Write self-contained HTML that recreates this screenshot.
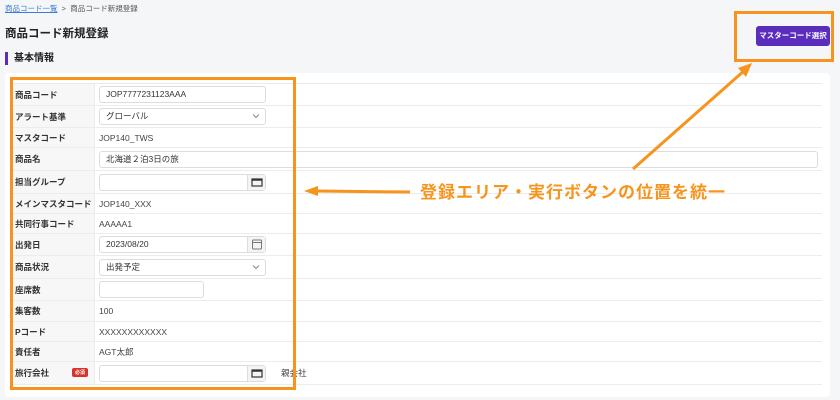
<!DOCTYPE html>
<html><head><meta charset="utf-8"><style>
*{box-sizing:border-box;margin:0;padding:0}
body{width:840px;height:400px;background:#f5f6f8;font-family:"Liberation Sans","Noto Sans CJK JP",sans-serif;color:#333;position:relative;overflow:hidden;font-size:8.5px}
.abs{position:absolute}
.bc{left:5px;top:3px;font-size:7.5px;color:#555}
.bc a{color:#3a7bd5;text-decoration:underline}
h1{position:absolute;left:5px;top:25px;font-size:11.5px;font-weight:bold;color:#222}
h2{position:absolute;left:5px;top:52px;font-size:10px;font-weight:bold;color:#222;border-left:3px solid #5b2dbd;padding-left:6px;line-height:13px}
.card{left:5px;top:73px;width:825px;height:324px;background:#fff;border-radius:4px}
.tbl{left:10px;top:83px;width:812px;border-top:1px solid #eaeaea}
.row{display:flex;border-bottom:1.5px solid #ececec;align-items:center}
.lb{width:85px;height:100%;background:#f7f7f8;font-weight:bold;font-size:8.5px;padding-left:5px;display:flex;align-items:center;border-right:1px solid #ececec;position:relative;align-self:stretch}
.vl{padding-left:4px;font-size:8.5px;color:#444}
.inp{height:17px;border:1px solid #ddd;border-radius:3px;background:#fff;position:relative;font-size:8.5px;padding-left:6px;line-height:15px;color:#333}
.cal{position:absolute;right:0;top:0;width:18px;height:15px;border-left:1px solid #ddd;background:#f4f4f4}
.chev{position:absolute;right:5px;top:4px}
.req{position:absolute;left:62px;top:6px;background:#d9322a;color:#fff;font-size:5px;padding:1px 3px;border-radius:2px}
.btn{left:756px;top:26px;width:74px;height:20px;background:#5b2dbd;color:#fff;font-size:7.5px;font-weight:bold;border-radius:3px;text-align:center;line-height:20px}
.ob{border:3px solid #f7941d}
.note{left:420px;top:178px;font-size:17px;color:#f7941d;font-weight:bold;letter-spacing:1px}
</style></head><body>
<div class="abs bc"><a>商品コード一覧</a> &nbsp;&gt;&nbsp; 商品コード新規登録</div>
<h1>商品コード新規登録</h1>
<h2>基本情報</h2>
<div class="abs btn">マスターコード選択</div>
<div class="abs card"></div>
<div class="abs tbl">
<div class="row" style="height:22px"><div class="lb">商品コード</div><div style="padding-left:4px"><div class="inp" style="width:167px">JOP7777231123AAA</div></div></div>
<div class="row" style="height:22px"><div class="lb">アラート基準</div><div style="padding-left:4px"><div class="inp" style="width:167px">グローバル<svg class="chev" width="8" height="6"><path d="M1 1.5 L4 4.5 L7 1.5" fill="none" stroke="#888" stroke-width="1"/></svg></div></div></div>
<div class="row" style="height:20px"><div class="lb">マスタコード</div><div class="vl">JOP140_TWS</div></div>
<div class="row" style="height:23px"><div class="lb">商品名</div><div style="padding-left:4px"><div class="inp" style="width:719px">北海道２泊3日の旅</div></div></div>
<div class="row" style="height:23px"><div class="lb">担当グループ</div><div style="padding-left:4px"><div class="inp" style="width:167px"><div class="cal"><svg width="18" height="15"><rect x="4" y="4" width="10" height="7" fill="none" stroke="#333" stroke-width="1.2"/><line x1="4" y1="5" x2="14" y2="5" stroke="#333" stroke-width="1.5"/></svg></div></div></div></div>
<div class="row" style="height:20px"><div class="lb">メインマスタコード</div><div class="vl">JOP140_XXX</div></div>
<div class="row" style="height:20px"><div class="lb">共同行事コード</div><div class="vl">AAAAA1</div></div>
<div class="row" style="height:22px"><div class="lb">出発日</div><div style="padding-left:4px"><div class="inp" style="width:167px">2023/08/20<div class="cal"><svg width="18" height="15"><rect x="4.5" y="3" width="9" height="9" rx="1" fill="none" stroke="#777" stroke-width="1"/><line x1="4.5" y1="5.5" x2="13.5" y2="5.5" stroke="#777"/></svg></div></div></div></div>
<div class="row" style="height:23px"><div class="lb">商品状況</div><div style="padding-left:4px"><div class="inp" style="width:167px">出発予定<svg class="chev" width="8" height="6"><path d="M1 1.5 L4 4.5 L7 1.5" fill="none" stroke="#888" stroke-width="1"/></svg></div></div></div>
<div class="row" style="height:22px"><div class="lb">座席数</div><div style="padding-left:4px"><div class="inp" style="width:105px"></div></div></div>
<div class="row" style="height:21px"><div class="lb">集客数</div><div class="vl">100</div></div>
<div class="row" style="height:20px"><div class="lb">Pコード</div><div class="vl">XXXXXXXXXXXX</div></div>
<div class="row" style="height:20px"><div class="lb">責任者</div><div class="vl">AGT太郎</div></div>
<div class="row" style="height:23px"><div class="lb">旅行会社<span class="req">必須</span></div><div style="padding-left:4px"><div class="inp" style="width:167px"><div class="cal"><svg width="18" height="15"><rect x="4" y="4" width="10" height="7" fill="none" stroke="#333" stroke-width="1.2"/><line x1="4" y1="5" x2="14" y2="5" stroke="#333" stroke-width="1.5"/></svg></div></div></div><div class="vl" style="padding-left:15px">親会社</div></div>
</div>
<div class="abs ob" style="left:10px;top:77px;width:286px;height:313px"></div>
<div class="abs ob" style="left:734px;top:11px;width:100px;height:51px"></div>
<div class="abs note">登録エリア・実行ボタンの位置を統一</div>
<svg class="abs" style="left:0;top:0" width="840" height="400">
<line x1="410" y1="192" x2="315" y2="191" stroke="#f7941d" stroke-width="3"/>
<polygon points="304,191 318,186 318,196" fill="#f7941d"/>
<line x1="633" y1="169" x2="745" y2="70" stroke="#f7941d" stroke-width="3"/>
<polygon points="752,63 738,68 746,77" fill="#f7941d"/>
</svg>
</body></html>
